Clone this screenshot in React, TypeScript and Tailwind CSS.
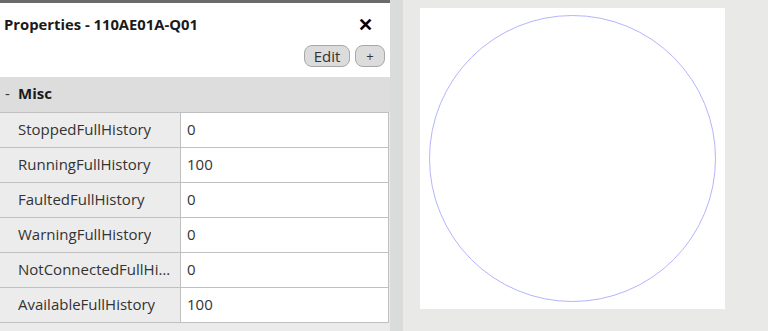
const rows: [string, string][] = [
  ["StoppedFullHistory", "0"],
  ["RunningFullHistory", "100"],
  ["FaultedFullHistory", "0"],
  ["WarningFullHistory", "0"],
  ["NotConnectedFullHistory", "0"],
  ["AvailableFullHistory", "100"],
];

export default function App() {
  return (
    <div
      className="flex h-[331px] w-[768px] overflow-hidden bg-[#e9e9e8] text-[#333]"
      style={{ fontFamily: '"Open Sans", "Noto Sans", sans-serif' }}
    >
      {/* Properties panel */}
      <div className="flex w-[390px] shrink-0 flex-col bg-[#ebebeb]">
        <div className="h-[3px] bg-[#6b6b6b]" />
        <div className="flex h-[74px] flex-col bg-white">
          <div className="flex h-[42px] items-center justify-between pl-[4px] pr-[17px]">
            <span className="text-[14.8px] font-bold text-[#1a1a1a]">Properties - 110AE01A-Q01</span>
            <span className="text-[18px] font-bold leading-none text-black">✕</span>
          </div>
          <div className="flex justify-end gap-[5px] pr-[5px]">
            <button className="h-[22px] w-[46px] rounded-[8px] border border-[#a8a8a8] bg-[#dcdcdc] text-[15px] leading-none text-[#333]">
              Edit
            </button>
            <button className="h-[22px] w-[30px] rounded-[8px] border border-[#a8a8a8] bg-[#dcdcdc] text-[13px] leading-none text-[#333]">
              +
            </button>
          </div>
        </div>
        <div className="flex h-[35px] items-center bg-[#dcdddc] pb-[3px] pl-[5px] text-[15px]">
          <span className="w-[13px]">-</span>
          <span className="font-bold text-[#1a1a1a]">Misc</span>
        </div>
        <div className="mr-[1px] border-t border-r border-[#c0c0c0]">
          {rows.map(([k, v]) => (
            <div key={k} className="flex h-[35px] border-b border-[#c0c0c0] text-[15px]">
              <div className="flex w-[181px] items-center border-r border-[#c0c0c0] bg-[#ececec] pb-[2px] pl-[18px] pr-[6px]">
                <span className="min-w-0 truncate">{k}</span>
              </div>
              <div className="flex flex-1 items-center bg-white pb-[2px] pl-[6px]">{v}</div>
            </div>
          ))}
        </div>
      </div>
      {/* Splitter */}
      <div className="w-[13px] shrink-0 bg-[#dadcdb]" />
      {/* Canvas */}
      <div className="flex-1 pl-[17px] pt-[8px]">
        <div className="h-[301px] w-[305px] bg-white">
          <svg width="305" height="301" viewBox="0 0 305 301">
            <circle cx="152.5" cy="150.5" r="143" fill="none" stroke="#b4b4ff" strokeWidth="1" />
          </svg>
        </div>
      </div>
    </div>
  );
}
